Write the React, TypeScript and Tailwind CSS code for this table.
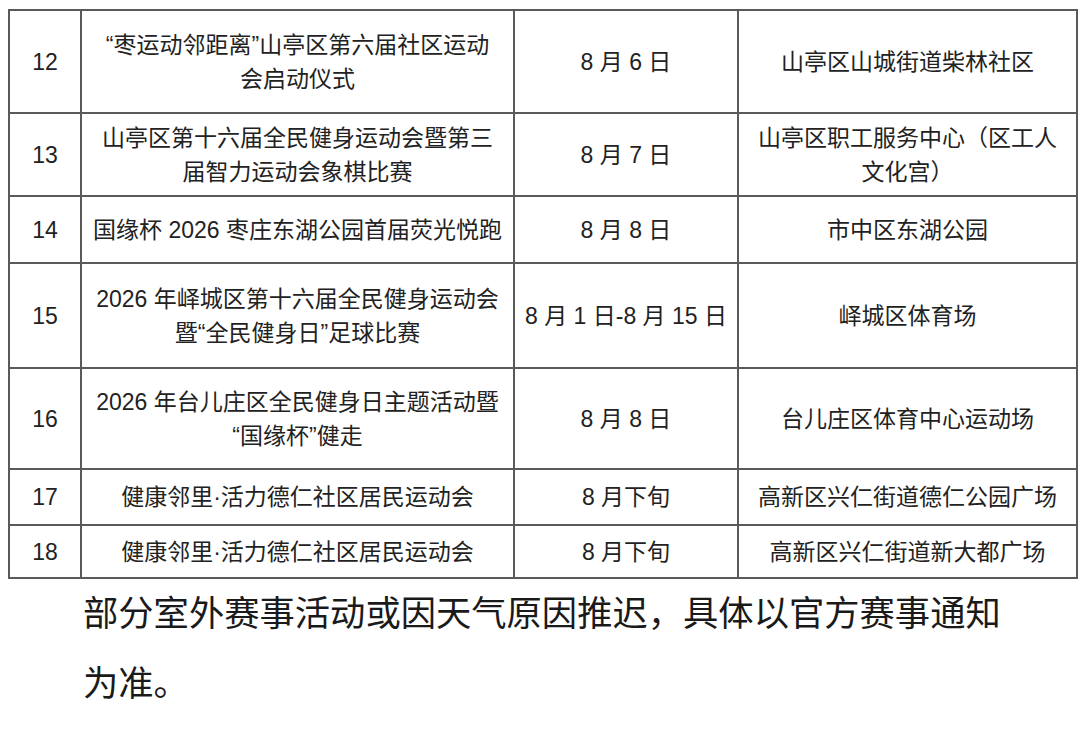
// Event schedule table (rows 12-18) with a closing note
const rows = [
  { no: "12", name: ["“枣运动邻距离”山亭区第六届社区运动", "会启动仪式"], date: "8 月 6 日", place: ["山亭区山城街道柴林社区"], h: "h-[103px]" },
  { no: "13", name: ["山亭区第十六届全民健身运动会暨第三", "届智力运动会象棋比赛"], date: "8 月 7 日", place: ["山亭区职工服务中心（区工人", "文化宫）"], h: "h-[83px]" },
  { no: "14", name: ["国缘杯 2026 枣庄东湖公园首届荧光悦跑"], date: "8 月 8 日", place: ["市中区东湖公园"], h: "h-[67px]" },
  { no: "15", name: ["2026 年峄城区第十六届全民健身运动会", "暨“全民健身日”足球比赛"], date: "8 月 1 日-8 月 15 日", place: ["峄城区体育场"], h: "h-[105px]" },
  { no: "16", name: ["2026 年台儿庄区全民健身日主题活动暨", "“国缘杯”健走"], date: "8 月 8 日", place: ["台儿庄区体育中心运动场"], h: "h-[101px]" },
  { no: "17", name: ["健康邻里·活力德仁社区居民运动会"], date: "8 月下旬", place: ["高新区兴仁街道德仁公园广场"], h: "h-[56px]" },
  { no: "18", name: ["健康邻里·活力德仁社区居民运动会"], date: "8 月下旬", place: ["高新区兴仁街道新大都广场"], h: "h-[53px]" },
];

const cell = "border-2 border-[#5a5a5a] text-center align-middle";

const Lines = ({ lines }: { lines: string[] }) => (
  <>
    {lines.map((l, i) => (
      <div key={i} className="whitespace-nowrap">
        {l}
      </div>
    ))}
  </>
);

export default function App() {
  return (
    <div className="w-[1080px] h-[729px] bg-white overflow-hidden font-['Liberation_Sans','Noto_Sans_CJK_SC',sans-serif]">
      <div className="pl-[8px] pt-[9px]">
        <table className="table-fixed border-collapse w-[1068px] text-[23px] leading-[34px] text-[#222]">
          <colgroup>
            <col className="w-[72px]" />
            <col className="w-[433px]" />
            <col className="w-[224px]" />
            <col className="w-[339px]" />
          </colgroup>
          <tbody>
            {rows.map((r) => (
              <tr key={r.no} className={r.h}>
                <td className={cell}>{r.no}</td>
                <td className={cell}>
                  <Lines lines={r.name} />
                </td>
                <td className={cell}>{r.date}</td>
                <td className={cell}>
                  <Lines lines={r.place} />
                </td>
              </tr>
            ))}
          </tbody>
        </table>
      </div>
      <p className="pl-[83px] w-[1010px] text-[35.3px] leading-[70px] text-[#1a1a1a]">
        部分室外赛事活动或因天气原因推迟，具体以官方赛事通知为准。
      </p>
    </div>
  );
}
